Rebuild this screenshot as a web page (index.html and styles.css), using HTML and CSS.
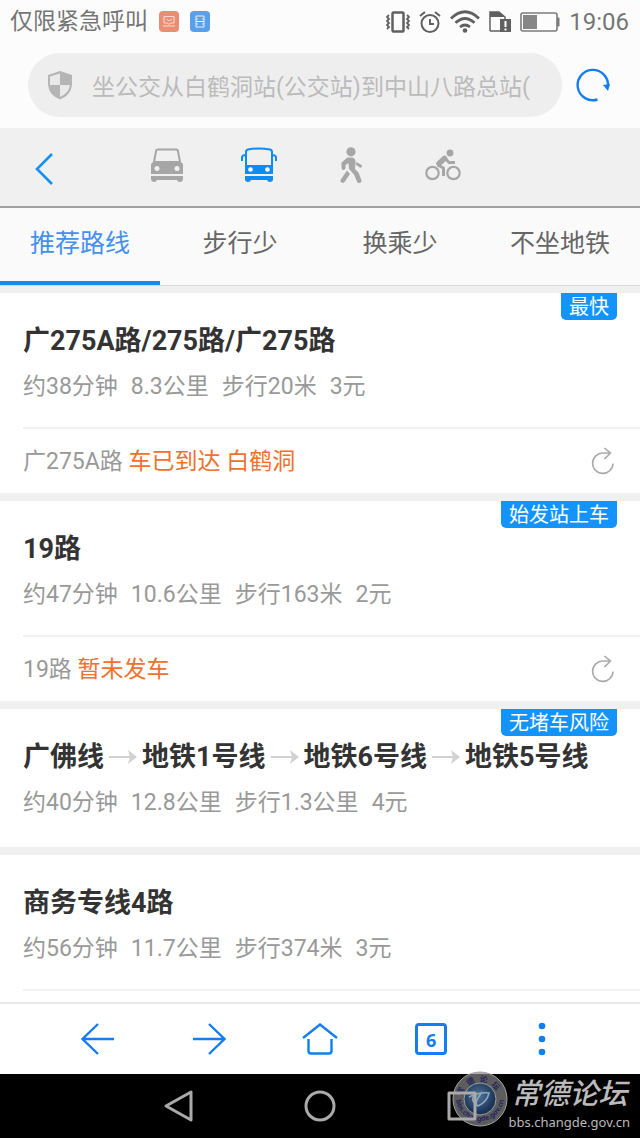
FILE: index.html
```html
<!DOCTYPE html>
<html lang="zh-CN">
<head>
    <meta charset="UTF-8">
    <meta name="viewport" content="width=device-width, initial-scale=1.0">
    <title>公交路线</title>
    <link rel="stylesheet" href="styles.css">
</head>
<body>
    <div class="status-bar">
        <span class="carrier">仅限紧急呼叫</span>
        <svg class="app-icon" width="20" height="21" viewBox="0 0 20 21">
            <rect width="20" height="21" rx="4" fill="#e98e73"/>
            <path d="M5 12V5.500h10V12M5 12h3q2 2.500 4 0h3M7.500 8l2.500 2 3-2M4 15h12" fill="none" stroke="#fbdcd2"/>
        </svg>
        <svg class="app-icon" width="20" height="21" viewBox="0 0 20 21">
            <rect width="20" height="21" rx="4" fill="#58a0ea"/>
            <path d="M6 5h8v11H6zM6 8h2M12 8h2M6 10.500h8M6 13h2M12 13h2" fill="none" stroke="#e2f0ff"/>
        </svg>
        <div class="status-right">
            <svg width="24" height="22" viewBox="0 0 24 22" fill="none" stroke="#606060">
                <rect x="6.500" y="1.500" width="11" height="19" rx="1" stroke-width="2.500"/>
                <path d="M3 4l-2 2 2 2-2 2 2 2-2 2 2 2-2 2M21 4l2 2-2 2 2 2-2 2 2 2-2 2 2 2" stroke-width="1.800"/>
            </svg>
            <svg width="22" height="22" viewBox="0 0 22 22" fill="none" stroke="#606060" stroke-width="2">
                <circle cx="11" cy="12.500" r="8.500"/>
                <path d="M11 8v5h4M1 5l5-4M21 5l-5-4"/>
            </svg>
            <svg width="30" height="23" viewBox="0 0 30 23" fill="none" stroke="#606060" stroke-width="2.800">
                <path d="M1 8.500Q15-5 29 8.500M5.500 12.800q9.500-8.500 19 0M10 17q5-4 10 0"/>
                <circle cx="15" cy="20.500" r="2.300" fill="#606060" stroke="none"/>
            </svg>
            <svg width="22" height="22" viewBox="0 0 22 22">
                <path d="M1 20V1h9l6 5v3M1 20h10" fill="none" stroke="#606060" stroke-width="1.500"/>
                <path d="M1 1h9l6 5H1zM11 8h11v13H11z" fill="#606060"/>
                <path d="M16.500 10v6M16.500 17.500v2" stroke="#fff" stroke-width="2"/>
            </svg>
            <svg width="40" height="20" viewBox="0 0 40 20">
                <rect x="1" y="1" width="36" height="18" rx="2" fill="none" stroke="#7b7b7b" stroke-width="1.600"/>
                <rect x="3" y="3" width="14" height="14" fill="#868686"/>
                <path d="M37 6h2v8h-2" fill="#7b7b7b" stroke="#7b7b7b"/>
            </svg>
            <span class="time">19:06</span>
        </div>
    </div>

    <form class="address-bar">
        <label class="address-field">
            <svg width="26" height="30" viewBox="0 0 26 30">
                <path d="M13 1l12 4v10q-1 10-12 14.500Q2 25 1 15V5z" fill="#b5b5b5"/>
                <path d="M13 3.500V15H3V6.500zM13 15h10q-1 8-10 12z" fill="#e9e9e9"/>
            </svg>
            <input type="text" aria-label="网址" value="坐公交从白鹤洞站(公交站)到中山八路总站(">
        </label>
        <button class="icon-button reload" type="button" aria-label="刷新">
            <svg width="34" height="34" viewBox="0 0 34 34">
                <path d="M21.500 31.500A15.200 15.200 0 1 1 32 18" fill="none" stroke="#147df0" stroke-width="2.400"/>
                <path d="M27 17l7-1-2 7z" fill="#147df0"/>
            </svg>
        </button>
    </form>

    <nav class="mode-bar">
        <button class="icon-button back" aria-label="返回">
            <svg width="20" height="34" viewBox="0 0 20 34"><path d="M18 2L3 17l15 15" fill="none" stroke="#1590f2" stroke-width="2.600"/></svg>
        </button>
        <button class="icon-button" aria-label="驾车">
            <svg width="34" height="34" viewBox="0 0 34 34">
                <path d="M4 14L6 3.500q0-2 2-2h18q2 0 2 2L30 14" fill="none" stroke="#a6a6a6" stroke-width="2"/>
                <path d="M4 13h26l3 3v10H1V16zM1 28h32v3q-.5 3-3 3t-3-2H7q-.5 2-3 2t-3-3z" fill="#a6a6a6"/>
                <circle cx="7" cy="20.500" r="2.500" fill="#f0f0f0"/>
                <circle cx="27" cy="20.500" r="2.500" fill="#f0f0f0"/>
            </svg>
        </button>
        <button class="icon-button" aria-label="公交">
            <svg width="36" height="36" viewBox="0 0 36 36">
                <path d="M5 19V5q0-2 2-2.500 11-2 22 0 2 .5 2 2.500v14M5 8q-4 0-4 2.500V14M31 8q4 0 4 2.500V14" fill="none" stroke="#0c8cf5" stroke-width="2"/>
                <path d="M4 18h28v9H4zM4 29h28v4q-.5 2-3 2t-3-2H10q-.5 2-3 2t-3-2z" fill="#0c8cf5"/>
                <circle cx="9.500" cy="22.500" r="2.300" fill="#fff"/>
                <circle cx="26.500" cy="22.500" r="2.300" fill="#fff"/>
            </svg>
        </button>
        <button class="icon-button" aria-label="步行">
            <svg width="24" height="36" viewBox="0 0 24 36" fill="#a6a6a6">
                <circle cx="12" cy="4.800" r="4.600"/>
                <path d="M8.500 10.500h5q3 1 3 4l-.5 7.500 3.500 3.500 3 8q0 2.500-2.500 2.500-1.500 0-2-1.500l-3-7-5-5.500-.5-6-3 2v3q-.3 2-2 2t-2-2v-5.500z"/>
                <path d="M17.500 15l5 3q1 1 .2 2-1 1-2 .5l-4-3zM8 23.500l3 3.500-5.500 8q-1.500 1.500-3 .5t-1-2.500z"/>
            </svg>
        </button>
        <button class="icon-button" aria-label="骑行">
            <svg width="36" height="32" viewBox="0 0 36 32" fill="none" stroke="#a6a6a6" stroke-linejoin="round">
                <circle cx="25" cy="4" r="3.400" fill="#a6a6a6" stroke="none"/>
                <circle cx="7.500" cy="24" r="6.200" stroke-width="2.200"/>
                <circle cx="28.500" cy="24" r="6.200" stroke-width="2.200"/>
                <path d="M14 14.500l5.500-5" stroke-width="5.500" stroke-linecap="round"/>
                <path d="M19.500 8.500l4.500 5h6" stroke-width="2.800"/>
                <path d="M12.500 16l6 3V27" stroke-width="3"/>
            </svg>
        </button>
    </nav>

    <nav class="tabs">
        <a class="tab active" href="#">推荐路线</a>
        <a class="tab" href="#">步行少</a>
        <a class="tab" href="#">换乘少</a>
        <a class="tab" href="#">不坐地铁</a>
    </nav>

    <main class="route-list">
        <section class="route">
            <span class="badge">最快</span>
            <div class="route-main">
                <h2>广275A路/275路/广275路</h2>
                <p class="info"><span>约38分钟</span><span>8.3公里</span><span>步行20米</span><span>3元</span></p>
            </div>
            <div class="route-live">
                <p>广275A路 <em>车已到达 白鹤洞</em></p>
                <button class="icon-button" aria-label="刷新到站">
                    <svg width="24" height="28" viewBox="0 0 24 28" fill="none" stroke="#aaa" stroke-width="1.600">
                        <path d="M22 16.500A10.200 10.200 0 1 1 12 6h7M13.500 1L19.500 6 13.500 12"/>
                    </svg>
                </button>
            </div>
        </section>

        <section class="route">
            <span class="badge">始发站上车</span>
            <div class="route-main">
                <h2>19路</h2>
                <p class="info"><span>约47分钟</span><span>10.6公里</span><span>步行163米</span><span>2元</span></p>
            </div>
            <div class="route-live">
                <p>19路 <em>暂未发车</em></p>
                <button class="icon-button" aria-label="刷新到站">
                    <svg width="24" height="28" viewBox="0 0 24 28" fill="none" stroke="#aaa" stroke-width="1.600">
                        <path d="M22 16.500A10.200 10.200 0 1 1 12 6h7M13.500 1L19.500 6 13.500 12"/>
                    </svg>
                </button>
            </div>
        </section>

        <section class="route no-live">
            <span class="badge">无堵车风险</span>
            <div class="route-main">
                <h2>
                    <span>广佛线</span>
                    <svg width="28" height="14" viewBox="0 0 28 14"><path d="M0 7h21" stroke="#d2d2d2" stroke-width="2"/><path d="M19 0l9 7-9 7 2-7z" fill="#d2d2d2"/></svg>
                    <span>地铁1号线</span>
                    <svg width="28" height="14" viewBox="0 0 28 14"><path d="M0 7h21" stroke="#d2d2d2" stroke-width="2"/><path d="M19 0l9 7-9 7 2-7z" fill="#d2d2d2"/></svg>
                    <span>地铁6号线</span>
                    <svg width="28" height="14" viewBox="0 0 28 14"><path d="M0 7h21" stroke="#d2d2d2" stroke-width="2"/><path d="M19 0l9 7-9 7 2-7z" fill="#d2d2d2"/></svg>
                    <span>地铁5号线</span>
                </h2>
                <p class="info"><span>约40分钟</span><span>12.8公里</span><span>步行1.3公里</span><span>4元</span></p>
            </div>
        </section>

        <section class="route">
            <div class="route-main">
                <h2>商务专线4路</h2>
                <p class="info"><span>约56分钟</span><span>11.7公里</span><span>步行374米</span><span>3元</span></p>
            </div>
            <div class="route-live"></div>
        </section>
    </main>

    <nav class="toolbar">
        <button class="icon-button" aria-label="后退">
            <svg width="34" height="34" viewBox="0 0 34 34"><path d="M17 2L1.500 17 17 32M2 17h31" /></svg>
        </button>
        <button class="icon-button" aria-label="前进">
            <svg width="34" height="34" viewBox="0 0 34 34"><path d="M17 2l15.500 15L17 32M32 17H1" /></svg>
        </button>
        <button class="icon-button" aria-label="主页">
            <svg width="36" height="34" viewBox="0 0 36 34"><path d="M1 16L18 2.500 35 16M6.500 17v12q0 2.500 2.500 2.500h18q2.500 0 2.500-2.500V17" /></svg>
        </button>
        <button class="icon-button" aria-label="标签页"><span class="tab-count">6</span></button>
        <button class="icon-button" aria-label="菜单">
            <svg class="dots" width="8" height="34" viewBox="0 0 8 34"><circle cx="4" cy="4" r="3.300"/><circle cx="4" cy="17" r="3.300"/><circle cx="4" cy="30" r="3.300"/></svg>
        </button>
    </nav>

    <div class="system-nav">
        <button class="icon-button" aria-label="系统返回">
            <svg width="34" height="34" viewBox="0 0 34 34"><path d="M30 3v28L5 17z"/></svg>
        </button>
        <button class="icon-button" aria-label="系统主页">
            <svg width="34" height="34" viewBox="0 0 34 34"><circle cx="17" cy="17" r="14"/></svg>
        </button>
        <button class="icon-button" aria-label="最近任务">
            <svg width="34" height="34" viewBox="0 0 34 34"><rect x="4" y="4" width="26" height="26"/></svg>
        </button>
        <div class="watermark">
            <svg width="56" height="56" viewBox="0 0 56 56">
                <defs>
                    <radialGradient id="globe" cx="45%" cy="40%">
                        <stop offset="0" stop-color="#52759b"/>
                        <stop offset="1" stop-color="#1c3658"/>
                    </radialGradient>
                    <path id="topArc" d="M9 30a19 19 0 0 1 38 0"/>
                    <path id="bottomArc" d="M4 26a24 24 0 0 0 48 0"/>
                </defs>
                <circle cx="28" cy="28" r="27" fill="#858585" fill-opacity=".7" stroke="#a5a5a5"/>
                <circle cx="28" cy="28" r="16" fill="url(#globe)" stroke="#999"/>
                <path d="M17 26q10-5 20-4-2 9-11 13-5-2 4-14M22 23q-3 7 1 9" fill="none" stroke="#90a8c0" stroke-width="1.500"/>
                <text class="seal-name"><textPath href="#topArc" startOffset="5">常  德  论  坛</textPath></text>
                <text class="seal-url"><textPath href="#bottomArc" startOffset="3">bbs.changde.gov.cn</textPath></text>
            </svg>
            <div class="watermark-text">
                <strong>常德论坛</strong>
                <span>bbs.changde.gov.cn</span>
            </div>
        </div>
    </div>
</body>
</html>
```

FILE: styles.css
```css
* {
    margin: 0;
    padding: 0;
    box-sizing: border-box;
}

body {
    display: flex;
    flex-direction: column;
    height: 100vh;
    overflow: hidden;
    background-color: #fcfcfc;
    font-family: Roboto, "Noto Sans CJK SC", sans-serif;
    font-size: 23px;
    color: #999;
}

svg {
    display: block;
    flex-shrink: 0;
}

.icon-button {
    display: flex;
    align-items: center;
    justify-content: center;
    background: none;
    border: none;
    cursor: pointer;
}

/* Phone status bar */
.status-bar {
    display: flex;
    align-items: center;
    flex-shrink: 0;
    height: 43px;
    padding: 0 11px 0 10px;
    color: #757575;
}

.carrier {
    line-height: 43px;
}

.app-icon {
    margin-left: 11px;
}

.status-right {
    display: flex;
    align-items: center;
    gap: 9px;
    margin-left: auto;
}

.time {
    font-size: 24px;
}

/* Address bar */
.address-bar {
    display: flex;
    align-items: center;
    flex-shrink: 0;
    height: 85px;
    padding: 0 16px 2px 28px;
}

.address-field {
    display: flex;
    align-items: center;
    gap: 19px;
    flex: 1;
    height: 64px;
    padding: 0 24px 0 19px;
    border-radius: 32px;
    background-color: #eee;
}

.address-field input {
    flex: 1;
    min-width: 0;
    height: 40px;
    border: none;
    outline: none;
    background: none;
    font: inherit;
    color: #bbb;
}

.reload {
    width: 62px;
    height: 64px;
}

/* Travel mode */
.mode-bar {
    display: grid;
    grid-template-columns: 121px repeat(4, 92px);
    flex-shrink: 0;
    height: 80px;
    padding-bottom: 4px;
    border-bottom: 2px solid #a0a0a0;
    background-color: #f0f0f0;
}

.back {
    justify-content: flex-start;
    padding: 8px 0 0 34px;
}

/* Sort tabs */
.tabs {
    display: flex;
    flex-shrink: 0;
    height: 78px;
    border-bottom: 1px solid #d8d8d8;
    background-color: #fafafa;
}

.tab {
    flex: 1;
    text-align: center;
    font-size: 25px;
    line-height: 72px;
    color: #666;
    text-decoration: none;
}

.tab.active {
    color: #4490ee;
    border-bottom: 4px solid #1989e8;
}

/* Routes */
.route-list {
    display: flex;
    flex-direction: column;
    gap: 8px;
    flex: 1;
    min-height: 0;
    overflow: hidden;
    padding-top: 7px;
    background-color: #f0f0f0;
}

.route {
    position: relative;
    flex-shrink: 0;
    padding-left: 23px;
    background-color: #fff;
}

.badge {
    position: absolute;
    top: 0;
    right: 23px;
    padding: 1px 8px 0;
    border-radius: 0 0 5px 5px;
    background-color: #1494fa;
    font-size: 20px;
    line-height: 26px;
    color: #fff;
}

.route-main {
    height: 134px;
    padding-top: 28px;
}

.no-live {
    padding-bottom: 4px;
}

.route h2 {
    display: flex;
    align-items: center;
    gap: 5px;
    font-size: 27px;
    line-height: 40px;
    font-weight: 700;
    color: #333;
}

.info {
    display: flex;
    gap: 13px;
    margin-top: 8px;
    line-height: 36px;
}

.route-live {
    display: flex;
    align-items: center;
    justify-content: space-between;
    height: 66px;
    padding-right: 25px;
    border-top: 2px solid #f2f2f2;
}

.route-live p {
    padding-bottom: 4px;
}

.route-live em {
    font-style: normal;
    color: #f0702d;
}

/* Browser toolbar */
.toolbar {
    display: grid;
    grid-template-columns: repeat(5, 1fr);
    flex-shrink: 0;
    height: 72px;
    padding: 0 42px;
    border-top: 2px solid #e8e8e8;
    background-color: #fff;
}

.toolbar svg {
    fill: none;
    stroke: #147df0;
    stroke-width: 2.4px;
}

.toolbar .dots {
    fill: #147df0;
    stroke: none;
}

.tab-count {
    width: 32px;
    height: 32px;
    border: 3px solid #147df0;
    border-radius: 4px;
    font: 700 18px/28px "Noto Sans", sans-serif;
    color: #147df0;
}

/* Android navigation */
.system-nav {
    position: relative;
    display: grid;
    grid-template-columns: repeat(3, 1fr);
    flex-shrink: 0;
    height: 64px;
    padding: 0 107px;
    background-color: #000;
}

.system-nav .icon-button {
    z-index: 1;
}

.system-nav .icon-button svg {
    fill: none;
    stroke: #aaa;
    stroke-width: 3px;
    stroke-linejoin: round;
}

.watermark {
    position: absolute;
    right: 10px;
    bottom: 6px;
    display: flex;
    align-items: flex-end;
    color: #bbb;
}

.watermark svg {
    margin-bottom: 5px;
}

.watermark-text {
    display: flex;
    flex-direction: column;
    align-items: center;
}

.watermark strong {
    font-size: 29px;
    line-height: 36px;
    font-weight: 500;
    font-style: italic;
}

.watermark-text span {
    font: 13px/20px "Noto Sans", sans-serif;
}

.seal-name {
    font-size: 8px;
    font-weight: 700;
    fill: #26265c;
    white-space: pre;
}

.seal-url {
    font: 700 7px "Noto Sans", sans-serif;
    fill: #26265c;
}
```
